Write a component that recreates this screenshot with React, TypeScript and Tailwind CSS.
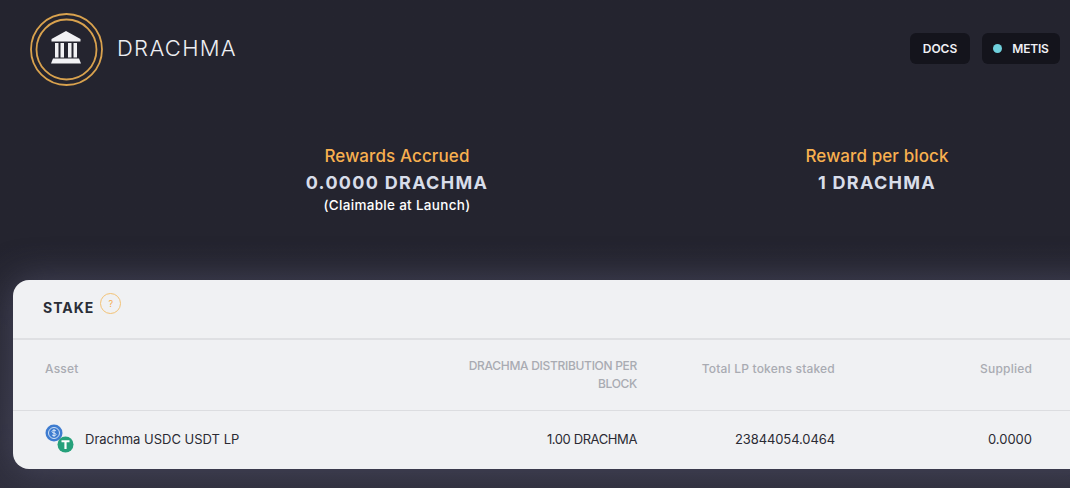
import React from 'react';

const FONT = 'font-["Inter","Liberation_Sans",sans-serif]';

const Logo = () => (
  <svg width="74" height="74" viewBox="0 0 74 74" className="shrink-0">
    <circle cx="36.500" cy="36.500" r="35.500" fill="none" stroke="#d9a24e" strokeWidth="1.800" />
    <circle cx="36.500" cy="36.500" r="30" fill="none" stroke="#d9a24e" strokeWidth="1.800" />
    <path d="M36 18 L50.500 26 V28.500 H21.500 V26 Z" fill="#f1f1f4" />
    <path d="M25 30h3.500v14.500H25zM30.500 30H34v14.500h-3.500zM38 30h3.500v14.500H38zM43.500 30H47v14.500h-3.500z" fill="#f1f1f4" />
    <path d="M23 45.500h26l2 5h-30z" fill="#f1f1f4" />
  </svg>
);

const PairIcon = () => (
  <svg width="32" height="32" viewBox="0 0 32 32" className="shrink-0">
    <circle cx="9" cy="9" r="8.500" fill="#3e7cd0" />
    <circle cx="9" cy="9" r="5.500" fill="none" stroke="#cfe0f5" strokeWidth="1" />
    <path d="M11 7c-.5-1-3.800-1.300-4 .5-.2 2 4 1 4 3 0 1.700-3.500 1.400-4 .3M9 5.200v7.600" fill="none" stroke="#e6f0fb" strokeWidth="0.9" />
    <circle cx="20.500" cy="20.500" r="8" fill="#26a17b" />
    <path d="M16.500 16.300h8v1.900h-2.900v6.800h-2.200v-6.800h-2.900z" fill="#fff" />
  </svg>
);

const COLS = 'grid grid-cols-[420px_172px_198px_197px] pl-[32px]';

export default function App() {
  return (
    <div className={`h-[488px] w-[1070px] overflow-hidden bg-gradient-to-b from-[#24242f] via-[#24242f] to-[#2f2f3d] ${FONT}`}>
      {/* Top bar */}
      <header className="flex items-start justify-between pl-[30px] pr-[10px] pt-[13px]">
        <div className="flex items-center gap-[13px]">
          <Logo />
          <span className="mb-[4px] text-[22px] font-light leading-none tracking-[1.300px] text-[#eeeef2]">DRACHMA</span>
        </div>
        <div className="mt-[20px] flex gap-[12px] text-[12px] font-semibold text-[#f0f0f5]">
          <button className="flex h-[31px] w-[60px] items-center justify-center rounded-[6px] bg-[#14141c]">DOCS</button>
          <button className="flex h-[31px] w-[78px] items-center justify-center gap-[10px] rounded-[6px] bg-[#14141c] tracking-[-0.200px]">
            <span className="h-[9px] w-[9px] rounded-full bg-[#6fd0dc]" />
            METIS
          </button>
        </div>
      </header>

      {/* Rewards */}
      <section className="ml-[157px] mt-[57px] flex">
        <div className="flex w-[480px] shrink-0 flex-col items-center">
          <div className="text-[17px] font-medium leading-[24px] tracking-[0.1px] text-[#f8b04f]">Rewards Accrued</div>
          <div className="pt-[1px] text-[18px] font-bold leading-[28px] tracking-[1.300px] text-[#d8dde9]">0.0000 DRACHMA</div>
          <div className="text-[13.500px] font-medium leading-[17px] tracking-[0.300px] text-white">(Claimable at Launch)</div>
        </div>
        <div className="flex w-[480px] shrink-0 flex-col items-center">
          <div className="text-[17px] font-medium leading-[24px] tracking-[0.1px] text-[#f8b04f]">Reward per block</div>
          <div className="pt-[1px] text-[18px] font-bold leading-[28px] tracking-[1.300px] text-[#d8dde9]">1 DRACHMA</div>
        </div>
      </section>

      {/* Stake card */}
      <section className="ml-[13px] mt-[66px] h-[189px] w-[1100px] rounded-[16px] bg-[#f0f1f3] shadow-[0_0_36px_rgba(100,100,130,0.5)]">
        <div className="flex h-[60px] items-start border-b-2 border-[#dfe0e3] pl-[30px]">
          <h2 className="mt-[18px] text-[14px] font-bold leading-[20px] tracking-[1px] text-[#2a2e37]">STAKE</h2>
          <span className="ml-[6px] mt-[13px] flex h-[21px] w-[21px] items-center justify-center rounded-full border border-[#f3c274] text-[9px] text-[#f5ab4e]">?</span>
        </div>
        <div className={`${COLS} h-[71px] items-center border-b border-[#dcdde0] text-[12px] font-medium leading-[18px] tracking-[0.200px] text-[#a9abb2]`}>
          <div className="pb-[13px]">Asset</div>
          <div className="whitespace-nowrap pb-[1px] text-right tracking-[-0.300px]">
            DRACHMA DISTRIBUTION PER
            <br />
            BLOCK
          </div>
          <div className="pb-[13px] text-right">Total LP tokens staked</div>
          <div className="pb-[13px] text-right">Supplied</div>
        </div>
        <div className={`${COLS} h-[57px] items-center text-[13px] text-[#2b2b33]`}>
          <div className="flex items-center gap-[8px]">
            <PairIcon />
            <span>Drachma USDC USDT LP</span>
          </div>
          <div className="text-right tracking-[-0.400px]">1.00 DRACHMA</div>
          <div className="text-right tracking-[-0.100px]">23844054.0464</div>
          <div className="text-right">0.0000</div>
        </div>
      </section>
    </div>
  );
}
